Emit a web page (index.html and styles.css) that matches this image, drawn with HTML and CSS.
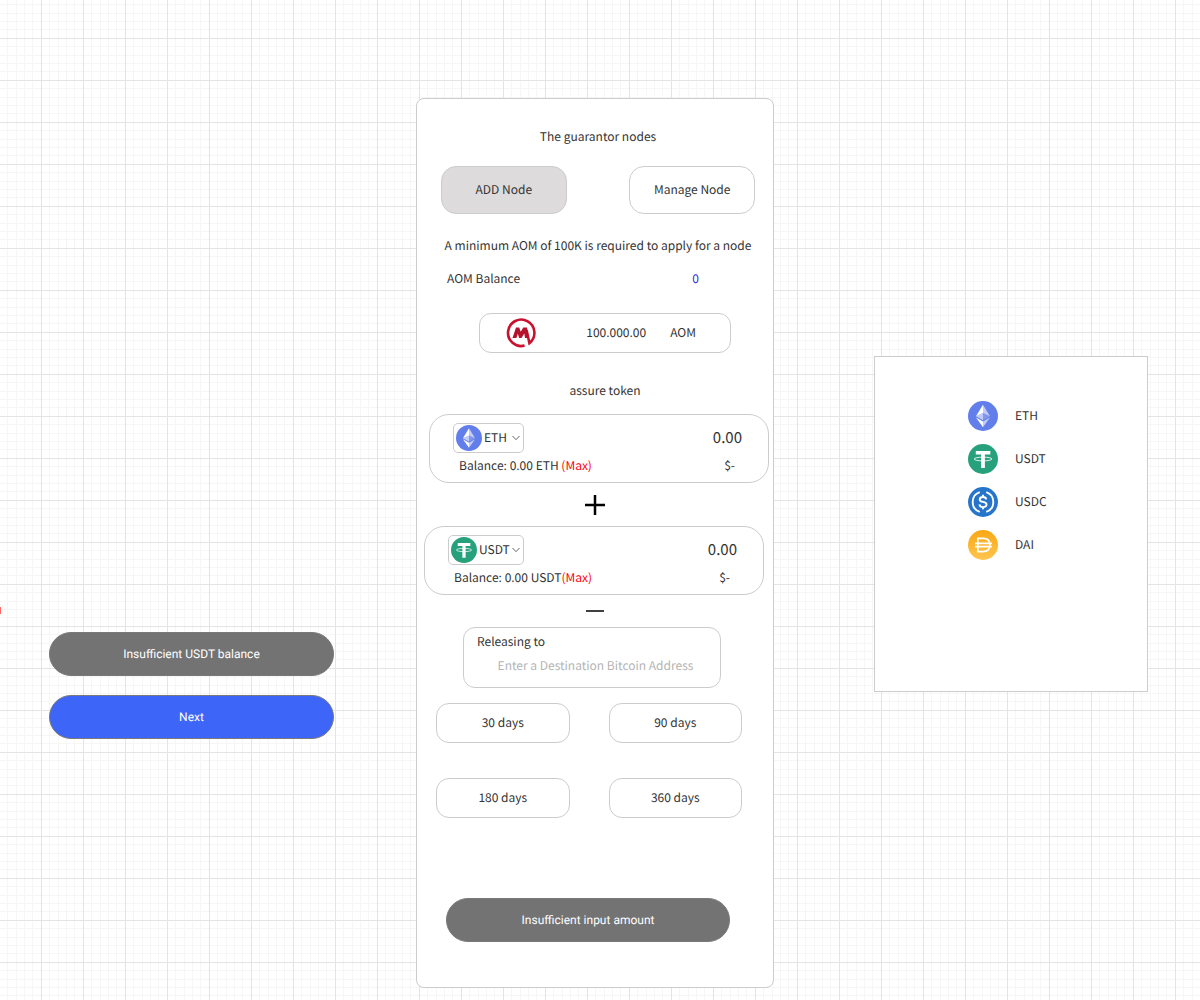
FILE: index.html
```html
<!DOCTYPE html>
<html lang="en">
<head>
    <meta charset="UTF-8">
    <meta name="viewport" content="width=device-width, initial-scale=1.0">
    <title>Guarantor nodes</title>
    <link rel="stylesheet" href="styles.css">
</head>
<body>
    <!-- Shared coin icons -->
    <svg class="sprite" aria-hidden="true">
        <defs>
            <linearGradient id="daiFill" x1="0" y1="0" x2="0" y2="1">
                <stop offset="0" stop-color="#f9a815"/>
                <stop offset="1" stop-color="#ffc54f"/>
            </linearGradient>
        </defs>
        <symbol id="eth" viewBox="0 0 32 32">
            <circle cx="16" cy="16" r="16" fill="#627eea"/>
            <path d="M16 4v8.9l7.5 3.3z" fill="#fff" fill-opacity=".6"/>
            <path d="M16 4L8.500 16.200 16 12.900z" fill="#fff"/>
            <path d="M16 21.900v6.100l7.500-10.400z" fill="#fff" fill-opacity=".6"/>
            <path d="M16 28v-6.100l-7.500-4.300z" fill="#fff"/>
            <path d="M16 20.600l7.500-4.400-7.500-3.300z" fill="#fff" fill-opacity=".2"/>
            <path d="M8.500 16.200l7.500 4.400v-7.700z" fill="#fff" fill-opacity=".6"/>
        </symbol>
        <symbol id="usdt" viewBox="0 0 32 32">
            <circle cx="16" cy="16" r="16" fill="#26a17b"/>
            <path d="M8.300 7.500h15.500v3.700h-5.800v14.300h-4V11.200H8.300z" fill="#fff"/>
            <ellipse cx="16" cy="16" rx="9.500" ry="2" fill="none" stroke="#fff" stroke-width=".9"/>
        </symbol>
        <symbol id="usdc" viewBox="0 0 32 32">
            <circle cx="16" cy="16" r="16" fill="#2775ca"/>
            <path d="M12.500 5.500a11.100 11.100 0 0 0 0 21M19.500 5.500a11.100 11.100 0 0 1 0 21" fill="none" stroke="#fff" stroke-width="2"/>
            <path d="M19.500 13.200c-.3-1.800-1.600-2.600-3.500-2.600-2.100 0-3.500 1-3.500 2.600 0 3.900 7.300 1.600 7.300 5.500 0 1.700-1.500 2.700-3.800 2.700-2.200 0-3.600-1-3.800-2.900M16 8.300v2.300M16 21.400v2.300" fill="none" stroke="#fff" stroke-width="2"/>
        </symbol>
        <symbol id="dai" viewBox="0 0 32 32">
            <circle cx="16" cy="16" r="16" fill="url(#daiFill)"/>
            <path d="M10.500 9h5.500c4.700 0 7.300 2.900 7.300 7s-2.600 7-7.300 7h-5.500zM7.500 14.300h18M7.500 17.700h18" fill="none" stroke="#fff" stroke-width="1.800"/>
        </symbol>
        <symbol id="chevron" viewBox="0 0 8 8">
            <path d="M0.500 2l3.500 3.700L7.500 2" fill="none" stroke="#666" stroke-width="1"/>
        </symbol>
    </svg>

    <span class="edge-mark"></span>

    <main class="board">
        <div class="states">
            <button class="action">Insufficient USDT balance</button>
            <button class="action next">Next</button>
        </div>

        <div class="card">
            <section class="intro">
                <h1>The guarantor nodes</h1>
                <div class="tabs">
                    <button class="tab active">ADD Node</button>
                    <button class="tab">Manage Node</button>
                </div>
                <p class="hint">A minimum AOM of 100K is required to apply for a node</p>
                <div class="balance-row">
                    <span>AOM Balance</span>
                    <span class="balance-value">0</span>
                </div>
            </section>

            <section class="stake">
                <div class="stake-box">
                    <svg class="aom-logo" viewBox="0 0 30 30" aria-hidden="true">
                        <path d="M18.600 27.600A13.200 13.200 0 1 1 23.400 25.200L20.600 12" fill="none" stroke="#cb1130" stroke-width="2.600"/>
                        <path d="M6.500 20L10 9.500h3.200l1.500 4.300 2.600-4.300h3.700l1.600 10.500h-3.600l-.7-4.600-2.800 4.600h-2.300l-1.400-4.200-1.400 4.200z" fill="#b5122e"/>
                    </svg>
                    <input class="stake-amount" type="text" value="100.000.00" aria-label="AOM amount">
                    <span>AOM</span>
                </div>
                <h2>assure token</h2>
            </section>

            <section class="token">
                <div class="token-main">
                    <label class="picker">
                        <svg class="picker-icon" aria-hidden="true"><use href="#eth"/></svg>
                        <select class="picker-select" aria-label="First token">
                            <option>ETH</option>
                            <option>USDT</option>
                            <option>USDC</option>
                            <option>DAI</option>
                        </select>
                        <svg class="chevron" aria-hidden="true"><use href="#chevron"/></svg>
                    </label>
                    <input class="token-amount" type="text" value="0.00" aria-label="First token amount">
                </div>
                <div class="token-info">
                    <span>Balance: 0.00 ETH <button class="max">(Max)</button></span>
                    <span class="usd">$-</span>
                </div>
            </section>

            <button class="sign" aria-label="Add token">
                <svg width="20" height="20" viewBox="0 0 20 20"><path d="M10 0v20M0 10h20" stroke="#000" stroke-width="2.500"/></svg>
            </button>

            <section class="token second">
                <div class="token-main">
                    <label class="picker wide">
                        <svg class="picker-icon" aria-hidden="true"><use href="#usdt"/></svg>
                        <select class="picker-select" aria-label="Second token">
                            <option>USDT</option>
                            <option>ETH</option>
                            <option>USDC</option>
                            <option>DAI</option>
                        </select>
                        <svg class="chevron" aria-hidden="true"><use href="#chevron"/></svg>
                    </label>
                    <input class="token-amount" type="text" value="0.00" aria-label="Second token amount">
                </div>
                <div class="token-info">
                    <span>Balance: 0.00 USDT<button class="max">(Max)</button></span>
                    <span class="usd">$-</span>
                </div>
            </section>

            <button class="sign minus" aria-label="Remove token">
                <svg width="18" height="2" viewBox="0 0 18 2"><path d="M0 1h18" stroke="#000" stroke-width="1.500"/></svg>
            </button>

            <div class="release">
                <label for="address">Releasing to</label>
                <input id="address" type="text" placeholder="Enter a Destination Bitcoin Address">
            </div>

            <div class="periods">
                <button class="period">30 days</button>
                <button class="period">90 days</button>
                <button class="period">180 days</button>
                <button class="period">360 days</button>
            </div>

            <div class="submit">
                <button class="action">Insufficient input amount</button>
            </div>
        </div>

        <ul class="token-list">
            <li><svg class="coin" aria-hidden="true"><use href="#eth"/></svg>ETH</li>
            <li><svg class="coin" aria-hidden="true"><use href="#usdt"/></svg>USDT</li>
            <li><svg class="coin" aria-hidden="true"><use href="#usdc"/></svg>USDC</li>
            <li><svg class="coin" aria-hidden="true"><use href="#dai"/></svg>DAI</li>
        </ul>
    </main>
</body>
</html>
```
FILE: styles.css
```css
* {
    box-sizing: border-box;
}

/* Graph paper background */
body {
    margin: 0;
    min-height: 100vh;
    background-color: #fff;
    background-image:
        linear-gradient(to right, transparent 41px, #e4e4e4 41px),
        linear-gradient(to bottom, transparent 41px, #e4e4e4 41px),
        linear-gradient(to right, transparent 7px, #f6f6f6 7px 8px, transparent 8px 16px, #f6f6f6 16px 17px, transparent 17px 24px, #f6f6f6 24px 25px, transparent 25px 32px, #f6f6f6 32px 33px, transparent 33px),
        linear-gradient(to bottom, transparent 7px, #f6f6f6 7px 8px, transparent 8px 16px, #f6f6f6 16px 17px, transparent 17px 24px, #f6f6f6 24px 25px, transparent 25px 32px, #f6f6f6 32px 33px, transparent 33px);
    background-size: 42px 42px;
    background-position: 0 -3px;
    font-family: "Noto Sans CJK SC", sans-serif;
    font-size: 12px;
    line-height: 20px;
    color: #333;
    text-rendering: geometricPrecision;
}

h1,
h2,
p {
    margin: 0;
    font-size: 12px;
    font-weight: normal;
    text-align: center;
}

button,
input,
select {
    font: inherit;
    color: inherit;
    padding: 0;
    border: none;
    background: none;
    text-rendering: inherit;
}

button {
    cursor: pointer;
}

.sprite {
    position: absolute;
    width: 0;
    height: 0;
}

.edge-mark {
    position: absolute;
    top: 607px;
    left: 0;
    width: 1px;
    height: 7px;
    background: #f66;
}

.board {
    display: grid;
    grid-template-columns: minmax(0, 285fr) minmax(0, 358fr) minmax(0, 292fr);
    column-gap: 82px;
    align-items: start;
    padding: 98px 52px 12px 49px;
}

/* Buttons */
.states {
    display: flex;
    flex-direction: column;
    gap: 19px;
    padding-top: 534px;
}

.action {
    width: 100%;
    height: 44px;
    border: 1px solid #797979;
    border-radius: 22px;
    background: #737373;
    color: #fff;
    font-family: Roboto, sans-serif;
    font-size: 12px;
}

.next {
    background: #3d65f8;
}

/* Main card */
.card {
    display: flex;
    flex-direction: column;
    padding: 28px 0 45px;
    border: 1px solid #ccc;
    border-radius: 8px;
    background: #fff;
}

.intro {
    padding: 0 18px 0 24px;
}

.tabs {
    display: flex;
    justify-content: space-between;
    margin: 19px 0 22px;
}

.tab {
    width: 40%;
    height: 48px;
    border: 1px solid #ccc;
    border-radius: 15px;
}

.tab.active {
    background: #dddbdc;
}

.balance-row {
    display: flex;
    justify-content: space-between;
    padding: 0 56px 0 6px;
    margin-top: 13px;
}

.balance-value {
    color: #3b2bd0;
}

.stake {
    padding: 24px 42px 13px 62px;
}

.stake-box {
    display: flex;
    align-items: center;
    height: 40px;
    padding: 0 34px 0 26px;
    margin-bottom: 28px;
    border: 1px solid #ccc;
    border-radius: 12px;
}

.aom-logo {
    width: 30px;
    height: 30px;
}

.stake-amount {
    flex: 1;
    min-width: 0;
    margin-right: 24px;
    text-align: right;
}

/* Token boxes */
.token {
    height: 69px;
    padding: 8px 26px 0 23px;
    margin: 0 4px 0 12px;
    border: 1px solid #ccc;
    border-radius: 20px;
}

.token.second {
    margin: 0 9px 0 7px;
}

.token-main,
.token-info {
    display: flex;
    justify-content: space-between;
    align-items: center;
}

.token-info {
    padding: 3px 7px 0 6px;
}

.picker {
    display: flex;
    align-items: center;
    width: 71px;
    height: 30px;
    padding: 0 3px 0 2px;
    border: 1px solid #ccc;
    border-radius: 5px;
}

.picker.wide {
    width: 76px;
}

.picker-icon {
    width: 26px;
    height: 26px;
    margin-right: 2px;
}

.picker-select {
    flex: 1;
    min-width: 0;
    appearance: none;
}

.chevron {
    width: 8px;
    height: 8px;
}

.token-amount {
    width: 100px;
    font-size: 15px;
    text-align: right;
}

.max {
    color: #f00;
}

.sign {
    display: flex;
    justify-content: center;
    align-items: center;
    height: 43px;
}

.sign.minus {
    height: 32px;
}

/* Address */
.release {
    display: flex;
    flex-direction: column;
    height: 61px;
    padding: 4px 13px;
    margin: 0 52px 15px 46px;
    border: 1px solid #ccc;
    border-radius: 12px;
}

.release input {
    margin: 4px 0 0 7px;
    text-align: center;
}

.release input::placeholder {
    color: #b4b4b4;
}

.periods {
    display: grid;
    grid-template-columns: 1fr 1fr;
    gap: 35px 39px;
    padding: 0 31px 0 19px;
}

.period {
    height: 40px;
    border: 1px solid #ccc;
    border-radius: 13px;
}

.submit {
    padding: 80px 43px 0 29px;
}

/* Token list */
.token-list {
    display: flex;
    flex-direction: column;
    gap: 13px;
    min-height: 336px;
    padding: 44px 93px;
    margin: 258px 0 0 18px;
    border: 1px solid #ccc;
    background: #fff;
    list-style: none;
}

.token-list li {
    display: flex;
    align-items: center;
    gap: 17px;
}

.coin {
    flex: none;
    width: 30px;
    height: 30px;
}
```
